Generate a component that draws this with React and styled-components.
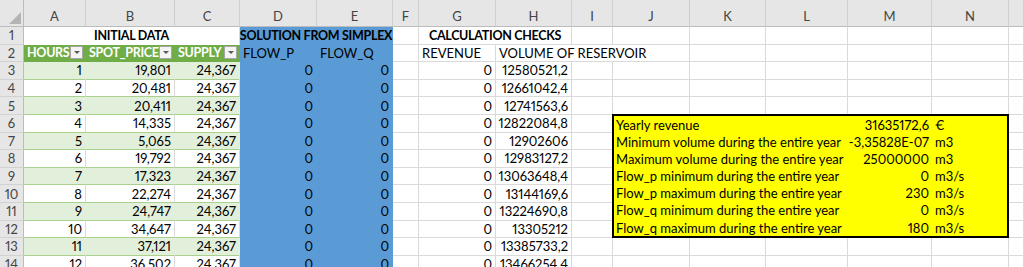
import React from 'react';
import styled, { createGlobalStyle } from 'styled-components';

/* ───────────── sheet geometry ───────────── */

const COLS = [
  { key: 'A', w: 62 },
  { key: 'B', w: 89 },
  { key: 'C', w: 65 },
  { key: 'D', w: 77 },
  { key: 'E', w: 76 },
  { key: 'F', w: 26 },
  { key: 'G', w: 77 },
  { key: 'H', w: 76 },
  { key: 'I', w: 41 },
  { key: 'J', w: 77 },
  { key: 'K', w: 76 },
  { key: 'L', w: 82 },
  { key: 'M', w: 84 },
  { key: 'N', w: 77 },
];

const ROW_H = 17.6;

// rows covered by the yellow summary box (J..N)
const BOX_FIRST = 6;
const BOX_LAST = 12;

const DATA = [
  [1, '19,801', '12580521,2'],
  [2, '20,481', '12661042,4'],
  [3, '20,411', '12741563,6'],
  [4, '14,335', '12822084,8'],
  [5, '5,065', '12902606'],
  [6, '19,792', '12983127,2'],
  [7, '17,323', '13063648,4'],
  [8, '22,274', '13144169,6'],
  [9, '24,747', '13224690,8'],
  [10, '34,647', '13305212'],
  [11, '37,121', '13385733,2'],
  [12, '36,502', '13466254,4'],
];

const SUMMARY = [
  ['Yearly revenue', '31635172,6', '€'],
  ['Minimum volume during the entire year', '-3,35828E-07', 'm3'],
  ['Maximum volume during the entire year', '25000000', 'm3'],
  ['Flow_p minimum during the entire year', '0', 'm3/s'],
  ['Flow_p maximum during the entire year', '230', 'm3/s'],
  ['Flow_q minimum during the entire year', '0', 'm3/s'],
  ['Flow_q maximum during the entire year', '180', 'm3/s'],
];

/* ───────────── styled‑components ───────────── */

const GlobalStyle = createGlobalStyle`
  html, body {
    margin: 0;
    padding: 0;
    background: #fff;
    overflow: hidden;
  }
  body {
    font-family: Lato, "Open Sans", sans-serif;
    font-variant-numeric: proportional-nums;
  }
`;

const Sheet = styled.div`
  display: grid;
  grid-template-columns: 24px ${COLS.map((c) => `${c.w}px`).join(' ')} 1fr;
  grid-template-rows: 27px repeat(14, ${ROW_H}px);
  width: 1024px;
  height: 267px;
  overflow: hidden;
  font-size: 13px;
  color: #000;
`;

const Corner = styled.div`
  background: #e6e6e6;
  border-right: 1px solid #bcbcbc;
  border-bottom: 1px solid #bcbcbc;
  display: flex;
  align-items: flex-end;
  justify-content: flex-end;
  padding: 0 2px 2px 0;
  box-sizing: border-box;
`;

const ColHead = styled.div`
  background: #e6e6e6;
  border-right: 1px solid #cfcfcf;
  border-bottom: 1px solid #bcbcbc;
  color: #444;
  display: flex;
  align-items: flex-end;
  justify-content: center;
  padding-bottom: 2px;
  box-sizing: border-box;
  font-size: 13px;
`;

const RowHead = styled.div`
  background: #e6e6e6;
  border-right: 1px solid #bcbcbc;
  border-bottom: 1px solid #d2d2d2;
  color: #444;
  display: flex;
  align-items: center;
  justify-content: center;
  box-sizing: border-box;
  font-size: 13px;
`;

const Cell = styled.div`
  grid-column: ${({ $span }) => ($span ? `span ${$span}` : 'auto')};
  display: flex;
  align-items: center;
  justify-content: ${({ $align }) =>
    $align === 'right' ? 'flex-end' : $align === 'center' ? 'center' : 'flex-start'};
  padding: 0 3px;
  box-sizing: border-box;
  white-space: nowrap;
  overflow: visible;
  font-weight: ${({ $bold }) => ($bold ? 700 : 400)};
  font-size: ${({ $bold }) => ($bold ? '12.5px' : '13px')};
  letter-spacing: ${({ $bold }) => ($bold ? '-0.3px' : '0')};
  background: ${({ $bg }) => $bg || 'transparent'};
  color: ${({ $color }) => $color || '#000'};
  border-right: 1px solid ${({ $vline }) => $vline || '#dadada'};
  border-bottom: 1px solid ${({ $hline }) => $hline || '#dadada'};
`;

const FilterButton = styled.span`
  margin-left: auto;
  margin-right: -1px;
  width: 13px;
  height: 13px;
  box-sizing: border-box;
  background: #f4f4f4;
  border: 1px solid #a6a6a6;
  display: flex;
  align-items: center;
  justify-content: center;
  flex-shrink: 0;

  &::after {
    content: '';
    border-left: 3px solid transparent;
    border-right: 3px solid transparent;
    border-top: 3px solid #595959;
  }
`;

const SummaryBox = styled.div`
  grid-column: 11 / 16;
  grid-row: ${BOX_FIRST + 1} / ${BOX_LAST + 2};
  z-index: 1;
  margin: -1px 0 0 -1px;
  background: #ffff00;
  border: 2px solid #000;
  box-sizing: border-box;
  display: grid;
  grid-template-columns: 233px 86px 1fr;
  grid-auto-rows: 1fr;
`;

const BoxCell = styled.div`
  display: flex;
  align-items: center;
  justify-content: ${({ $align }) => ($align === 'right' ? 'flex-end' : 'flex-start')};
  padding: ${({ $align }) => ($align === 'right' ? '0 4px 0 0' : '0 0 0 2px')};
  white-space: nowrap;
`;

/* ───────────── pieces ───────────── */

const GREEN_HEAD = '#70ad47';
const GREEN_BAND = '#e2efda';
const GREEN_LINE = '#a9d08e';
const BLUE = '#5b9bd5';

function CornerMark() {
  return (
    <svg width="12" height="12" viewBox="0 0 12 12">
      <polygon points="12,0 12,12 0,12" fill="#b4b4b4" />
    </svg>
  );
}

// empty cells from column index `from` up to `to`, plus the trailing partial column
function Blanks({ from, to }) {
  const keys = COLS.slice(from, to);
  return (
    <>
      {keys.map((c) => (
        <Cell key={c.key} />
      ))}
      <Cell />
    </>
  );
}

function TableCell({ band, children }) {
  return (
    <Cell
      $align="right"
      $bg={band ? GREEN_BAND : 'transparent'}
      $hline={GREEN_LINE}
      $vline={band ? GREEN_BAND : '#dadada'}
    >
      {children}
    </Cell>
  );
}

function BlueCell({ children, align = 'right', span, bold }) {
  return (
    <Cell $bg={BLUE} $vline={BLUE} $hline={BLUE} $align={align} $span={span} $bold={bold}>
      {children}
    </Cell>
  );
}

/* ───────────── component ───────────── */

export default function App() {
  return (
    <>
      <GlobalStyle />
      <Sheet>
        {/* column letters */}
        <Corner>
          <CornerMark />
        </Corner>
        {COLS.map((c) => (
          <ColHead key={c.key}>{c.key}</ColHead>
        ))}
        <ColHead />

        {/* row 1 */}
        <RowHead>1</RowHead>
        <Cell $span={3} $align="center" $bold $hline="#fff">
          INITIAL DATA
        </Cell>
        <BlueCell span={2} align="center" bold>
          SOLUTION FROM SIMPLEX
        </BlueCell>
        <Cell />
        <Cell $span={2} $align="center" $bold>
          CALCULATION CHECKS
        </Cell>
        <Blanks from={8} to={14} />

        {/* row 2 */}
        <RowHead>2</RowHead>
        {['HOURS', 'SPOT_PRICE', 'SUPPLY'].map((h) => (
          <Cell key={h} $bg={GREEN_HEAD} $color="#fff" $bold $vline={GREEN_HEAD} $hline={GREEN_HEAD}>
            {h}
            <FilterButton />
          </Cell>
        ))}
        <BlueCell align="left">FLOW_P</BlueCell>
        <BlueCell align="left">FLOW_Q</BlueCell>
        <Cell />
        <Cell>REVENUE</Cell>
        <Cell $span={3}>VOLUME OF RESERVOIR</Cell>
        <Blanks from={10} to={14} />

        {/* rows 3 – 14 */}
        {DATA.map(([hour, price, volume], i) => {
          const row = i + 3;
          const band = i % 2 === 0;
          const underBox = row >= BOX_FIRST && row <= BOX_LAST;
          return (
            <React.Fragment key={hour}>
              <RowHead>{row}</RowHead>
              <TableCell band={band}>{hour}</TableCell>
              <TableCell band={band}>{price}</TableCell>
              <TableCell band={band}>24,367</TableCell>
              <BlueCell>0</BlueCell>
              <BlueCell>0</BlueCell>
              <Cell />
              <Cell $align="right">0</Cell>
              <Cell $align="right">{volume}</Cell>
              <Blanks from={8} to={underBox ? 9 : 14} />
            </React.Fragment>
          );
        })}

        <SummaryBox>
          {SUMMARY.map(([label, value, unit]) => (
            <React.Fragment key={label}>
              <BoxCell>{label}</BoxCell>
              <BoxCell $align="right">{value}</BoxCell>
              <BoxCell>{unit}</BoxCell>
            </React.Fragment>
          ))}
        </SummaryBox>
      </Sheet>
    </>
  );
}
